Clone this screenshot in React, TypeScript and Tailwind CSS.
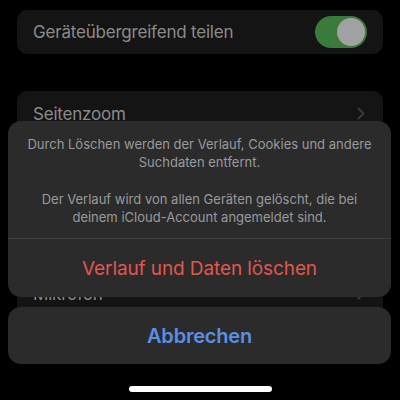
import React from 'react';

// only Seitenzoom and Mikrofon peek out from under the sheet
const rows = ['Seitenzoom', '', '', '', 'Mikrofon', ''];

const Chevron = () => (
  <svg width="8" height="13" viewBox="0 0 8 13" fill="none">
    <path d="M1.5 1.5L6.5 6.5L1.5 11.5" stroke="#3b3b3d" strokeWidth="2" strokeLinecap="round" strokeLinejoin="round" />
  </svg>
);

export default function App() {
  return (
    <div
      className="relative w-[400px] h-[400px] overflow-hidden bg-black"
      style={{ fontFamily: 'Inter, "Noto Sans", sans-serif' }}
    >
      {/* Einstellungen (abgedunkelt) */}
      <div className="flex flex-col px-[17px] pt-[10px]">
        <div className="flex items-center justify-between h-[44px] rounded-[10px] bg-[#141414] pl-[16px] pr-[16px]">
          <span className="pt-[2px] text-[17px] text-[#8b8b8b] tracking-[-0.2px]">Geräteübergreifend teilen</span>
          <div className="flex items-center justify-end w-[52px] h-[32px] rounded-full bg-[#3a7a3b] pr-[2px]">
            <div className="w-[28px] h-[28px] rounded-full bg-[#a2a2a4]" />
          </div>
        </div>

        <div className="mt-[37px] flex flex-col rounded-[10px] bg-[#141414]">
          {rows.map((r, i) => (
            <div key={i} className="flex items-center justify-between h-[45px] pl-[16px] pr-[18px]">
              <span className="pt-[2px] text-[17px] text-[#8b8b8b] tracking-[-0.2px]">{r}</span>
              <Chevron />
            </div>
          ))}
        </div>
      </div>

      {/* Action Sheet */}
      <div className="absolute left-[8px] right-[9px] top-[121px] flex flex-col gap-[10px]">
        <div className="flex flex-col rounded-[13px] bg-[#2b2b2c]">
          <div className="flex flex-col gap-[19px] px-[16px] pt-[14px] pb-[12px] text-center text-[13px] leading-[18px] text-[#9a9a9c]">
            <p>Durch Löschen werden der Verlauf, Cookies und andere Suchdaten entfernt.</p>
            <p>Der Verlauf wird von allen Geräten gelöscht, die bei deinem iCloud-Account angemeldet sind.</p>
          </div>
          <div className="h-px bg-[#3e3e40]" />
          <div className="flex items-center justify-center h-[58px] pt-[3px] text-[19px] text-[#e2564d] tracking-[-0.1px]">
            Verlauf und Daten löschen
          </div>
        </div>
        <div className="flex items-center justify-center h-[57px] rounded-[13px] bg-[#2b2b2c] text-[20px] font-semibold text-[#5b8fe4] tracking-[-0.2px]">
          Abbrechen
        </div>
      </div>

      {/* Home-Indikator */}
      <div className="absolute left-[129px] top-[386px] w-[143px] h-[6px] rounded-full bg-white" />
    </div>
  );
}
